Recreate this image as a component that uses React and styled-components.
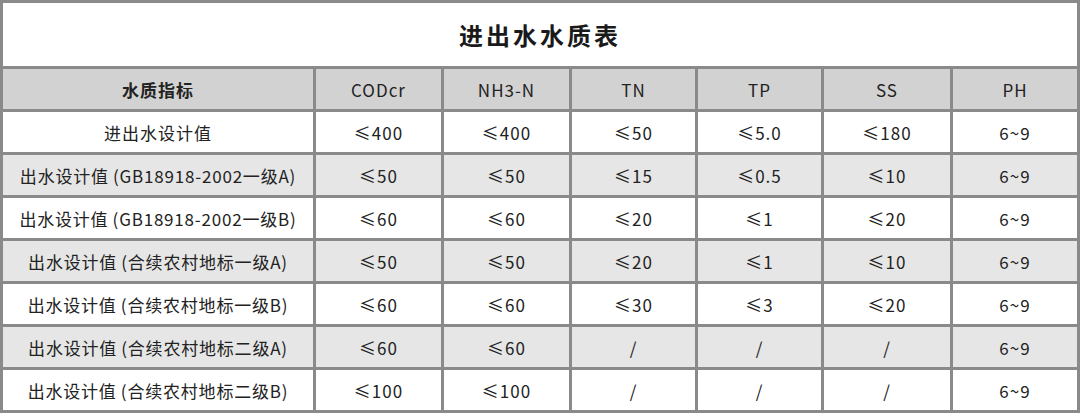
import styled, { createGlobalStyle } from "styled-components";

const GlobalStyle = createGlobalStyle`
  html, body {
    margin: 0;
    padding: 0;
    background: #ffffff;
  }
  body {
    font-family: "Noto Sans CJK SC", "Noto Sans", sans-serif;
    color: #222222;
  }
`;

const header = ["水质指标", "CODcr", "NH3-N", "TN", "TP", "SS", "PH"];

const rows = [
  ["进出水设计值", "≤400", "≤400", "≤50", "≤5.0", "≤180", "6~9"],
  ["出水设计值\u2009(GB18918-2002一级A)", "≤50", "≤50", "≤15", "≤0.5", "≤10", "6~9"],
  ["出水设计值\u2009(GB18918-2002一级B)", "≤60", "≤60", "≤20", "≤1", "≤20", "6~9"],
  ["出水设计值\u2009(合续农村地标一级A)", "≤50", "≤50", "≤20", "≤1", "≤10", "6~9"],
  ["出水设计值\u2009(合续农村地标一级B)", "≤60", "≤60", "≤30", "≤3", "≤20", "6~9"],
  ["出水设计值\u2009(合续农村地标二级A)", "≤60", "≤60", "/", "/", "/", "6~9"],
  ["出水设计值\u2009(合续农村地标二级B)", "≤100", "≤100", "/", "/", "/", "6~9"],
];

const Table = styled.div`
  display: grid;
  grid-template-columns: 310px 125px 125px 123px 123px 126px 124px;
  grid-template-rows: 63px repeat(8, 40px);
  gap: 3px;
  padding: 3px;
  width: 1080px;
  height: 413px;
  box-sizing: border-box;
  background: #8a8a8a;
`;

const Title = styled.div`
  grid-column: 1 / -1;
  background: #ffffff;
  display: flex;
  align-items: center;
  justify-content: center;
  font-size: 24px;
  font-weight: 700;
  letter-spacing: 3px;
  color: #1a1a1a;
`;

const Cell = styled.div`
  display: flex;
  align-items: center;
  justify-content: center;
  font-size: 17px;
  letter-spacing: ${(p) => (p.$first ? "0.8px" : "1px")};
  white-space: nowrap;
  background: ${(p) =>
    p.$kind === "head" ? "#d2d2d2" : p.$kind === "shade" ? "#e6e6e6" : "#ffffff"};
  font-weight: ${(p) => (p.$bold ? 600 : 400)};
`;

export default function App() {
  return (
    <>
      <GlobalStyle />
      <Table>
        <Title>进出水水质表</Title>
        {header.map((h, i) => (
          <Cell key={"h" + i} $kind="head" $bold={i === 0}>
            {h}
          </Cell>
        ))}
        {rows.map((r, ri) =>
          r.map((c, ci) => (
            <Cell
              key={ri + "-" + ci}
              $first={ci === 0 && ri > 0}
              $kind={ri % 2 === 1 ? "shade" : "plain"}
            >
              {c}
            </Cell>
          ))
        )}
      </Table>
    </>
  );
}
